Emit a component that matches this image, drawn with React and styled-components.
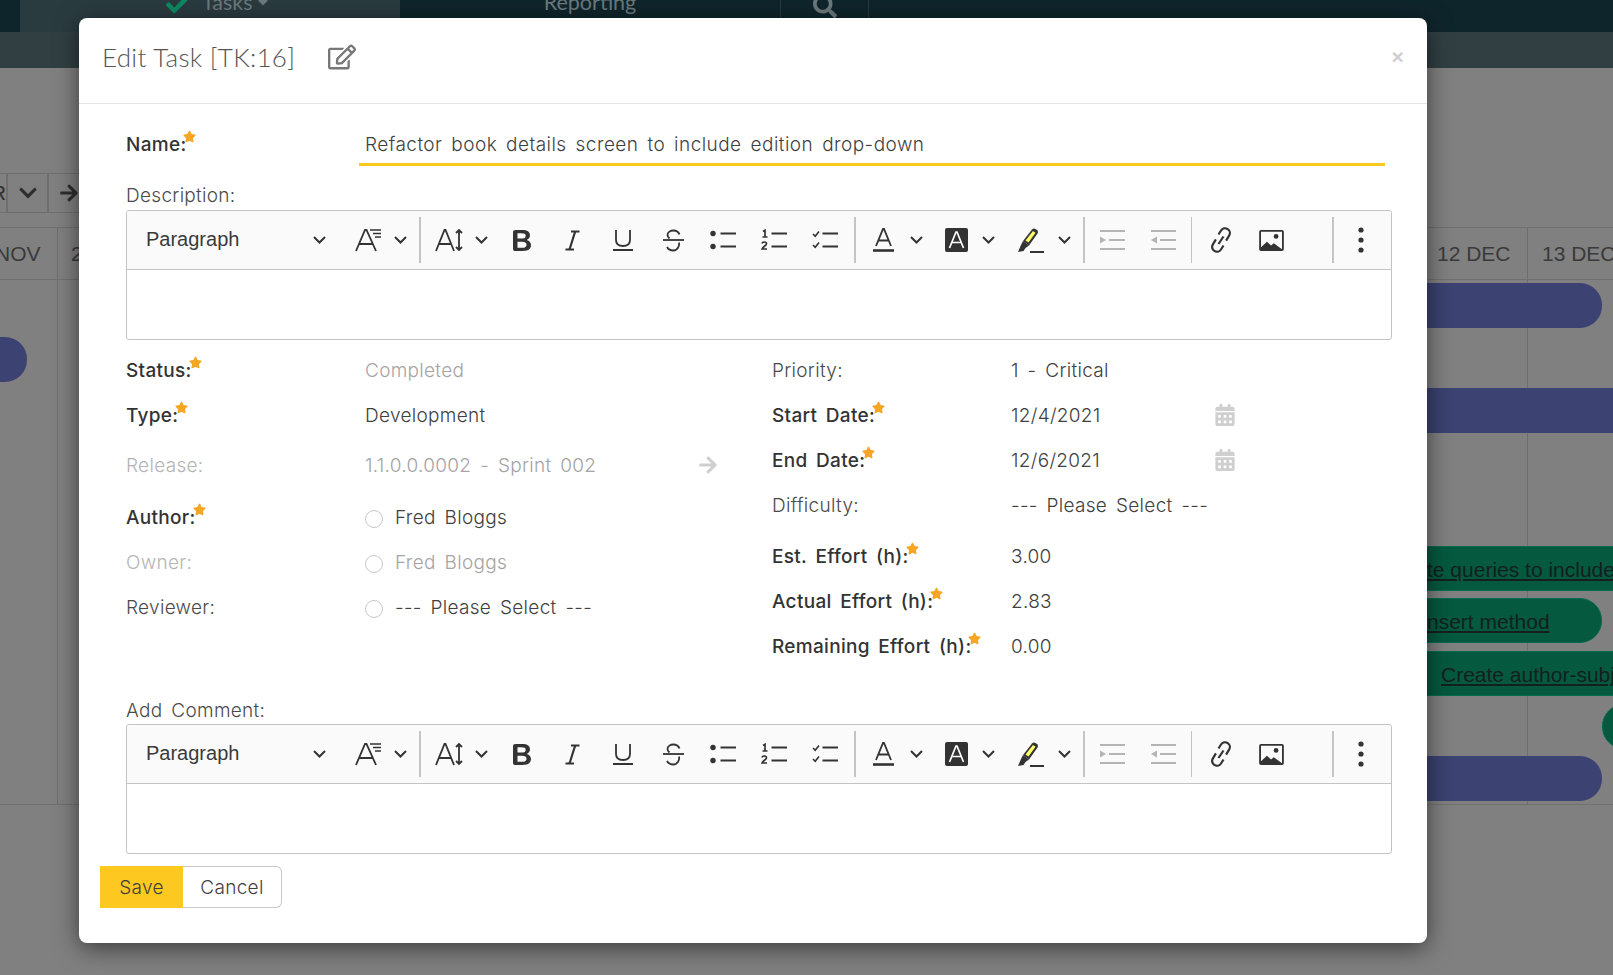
import React from 'react'
import styled, { createGlobalStyle } from 'styled-components'
import { FaRegEdit, FaStar, FaCalendarAlt, FaArrowRight, FaCheck, FaSearch, FaCaretDown, FaChevronDown } from 'react-icons/fa'

const GlobalStyle = createGlobalStyle`
  html, body {
    margin: 0;
    height: 100%;
    overflow: hidden;
    background: #808080;
  }
  * { box-sizing: border-box; }
`

const Page = styled.div`
  position: relative;
  width: 1613px;
  height: 975px;
  overflow: hidden;
  background: #808080;
  font-family: "Liberation Sans", Arial, sans-serif;
`

const TopBar = styled.div`
  display: flex;
  height: 32px;
  padding-left: 20px;
  background: #0f252c;
`

const NavTab = styled.div`
  display: flex;
  justify-content: ${p => p.$center ? 'center' : 'flex-start'};
  align-items: flex-start;
  gap: 3px;
  width: ${p => p.$w}px;
  height: 32px;
  padding-left: ${p => p.$pad || 0}px;
  overflow: hidden;
  font: 400 21.5px/20px Lato, sans-serif;
  color: #6c7a7d;
  background: ${p => p.$active ? '#2a3b40' : 'transparent'};
  border-right: 1px solid ${p => p.$active ? 'transparent' : '#2a3b40'};
  & > * { margin-top: -8px; }
  & > svg { margin-top: -6px; }
`

const TaskCheck = styled(FaCheck)`
  margin-right: 11px;
`

const SubBar = styled.div`
  height: 36px;
  background: #313f43;
`

const Gantt = styled.div`
  position: relative;
  height: 736px;
  color: #3a3a3a;
`

const GridLineV = styled.div`
  position: absolute;
  left: ${p => p.$x}px;
  top: 160px;
  width: 1px;
  height: 576px;
  background: #6e6e6e;
`

const GridLineH = styled.div`
  position: absolute;
  left: 0;
  right: 0;
  top: ${p => p.$y}px;
  height: 1px;
  background: #707070;
`

const GanttLabel = styled.div`
  position: absolute;
  left: ${p => p.$x}px;
  top: ${p => p.$y}px;
  font-size: 21px;
  line-height: 24px;
  white-space: nowrap;
`

const ToolCell = styled.div`
  position: absolute;
  display: flex;
  align-items: center;
  justify-content: ${p => p.$end ? 'flex-end' : 'center'};
  left: ${p => p.$x}px;
  top: 105px;
  width: 41px;
  height: 40px;
  overflow: hidden;
  border: 1px solid #6e6e6e;
  color: #2e2e2e;
  font-size: 20px;
`

const CutText = styled.span`
  flex: none;
  margin-right: -11px;
`

const Bar = styled.div`
  position: absolute;
  left: ${p => p.$x}px;
  top: ${p => p.$y}px;
  width: ${p => p.$w}px;
  height: 45px;
  display: flex;
  align-items: center;
  padding: 3px 0 0 ${p => p.$pad || 0}px;
  overflow: hidden;
  white-space: nowrap;
  font-size: 21px;
  color: #14201d;
  text-decoration: underline;
  background: ${p => p.$green ? '#04593f' : '#3c4272'};
  border: ${p => p.$green ? '1px solid #066c4e' : 'none'};
  border-radius: ${p => p.$radius || '0'};
`

const Modal = styled.div`
  position: absolute;
  left: 79px;
  top: 18px;
  width: 1348px;
  height: 925px;
  display: flex;
  flex-direction: column;
  background: #fff;
  border-radius: 8px;
  box-shadow: 0 5px 24px rgba(0, 0, 0, .55);
  color: #3f3f3f;
  font-family: Inter, "Noto Sans", sans-serif;
  font-size: 19px;
  font-weight: 300;
  letter-spacing: .3px;
  word-spacing: 3.2px;
`

const ModalHeader = styled.header`
  display: flex;
  align-items: center;
  justify-content: space-between;
  flex: none;
  height: 86px;
  padding: 0 23px 8px 23px;
  border-bottom: 1px solid #e5e5e5;
`

const TitleGroup = styled.div`
  display: flex;
  align-items: center;
  gap: 33px;
  color: #777;
`

const Title = styled.h4`
  margin: 0;
  font: 300 26px/30px Lato, sans-serif;
  letter-spacing: .3px;
  word-spacing: 0;
  color: #555;
`

const Close = styled.span`
  font: 700 21px/21px "Liberation Sans", sans-serif;
  color: #cfcfcf;
`

const ModalBody = styled.div`
  display: flex;
  flex-direction: column;
  padding: 18px 35px 0 47px;
`

const NameRow = styled.div`
  display: flex;
  align-items: center;
  height: 44px;
`

const NameLabel = styled.div`
  flex: none;
  margin-top: 2px;
`

const Label = styled.label`
  display: block;
  flex: none;
  width: ${p => p.$w || 239}px;
  line-height: 22px;
  font-weight: ${p => p.$required ? 500 : 300};
  color: ${p => p.$muted ? '#b4b4b4' : p.$required ? '#333' : '#4a4a4a'};
  white-space: nowrap;
  svg {
    position: relative;
    top: -8px;
    margin-left: -3px;
    color: #f5a623;
  }
`

const NameInput = styled.div`
  flex: 1;
  height: 44px;
  margin: 0 7px 0 -6px;
  padding: 0 0 0 6px;
  line-height: 46px;
  letter-spacing: .45px;
  border-bottom: 3px solid #fdc921;
  white-space: nowrap;
`

const SectionLabel = styled.div`
  margin-top: ${p => p.$mt}px;
  height: ${p => p.$h}px;
  line-height: ${p => p.$h + 2}px;
  color: #4a4a4a;
`

const Editor = styled.div`
  height: 130px;
  border: 1px solid #c4c4c4;
  border-radius: 3px;
  display: flex;
  flex-direction: column;
`

const Toolbar = styled.div`
  display: flex;
  align-items: center;
  flex: none;
  height: 59px;
  padding-left: 19px;
  background: #fafafa;
  border-bottom: 1px solid #c4c4c4;
  border-radius: 3px 3px 0 0;
  color: #333;
`

const ParagraphLabel = styled.span`
  width: 167px;
  margin-top: -2px;
  font: 400 20px/24px "Liberation Sans", sans-serif;
  letter-spacing: 0;
  word-spacing: 0;
  color: #3a3a3a;
`

const Tool = styled.span`
  display: flex;
  align-items: center;
  justify-content: center;
  flex: none;
  width: ${p => p.$w}px;
  margin-left: ${p => p.$gap || 0}px;
  color: ${p => p.$disabled ? '#b4b4b4' : '#333'};
`

const ToolSep = styled.span`
  flex: none;
  width: ${p => p.$w || 2}px;
  height: 46px;
  margin-left: ${p => p.$gap}px;
  background: #c4c4c4;
`

const FieldGrid = styled.div`
  display: flex;
  margin-top: 8px;
`

const FieldColumn = styled.div`
  display: flex;
  flex-direction: column;
  width: ${p => p.$w}px;
`

const Field = styled.div`
  display: flex;
  align-items: center;
  height: 45px;
  margin-top: ${p => p.$mt || 0}px;
`

const Value = styled.span`
  display: flex;
  align-items: center;
  flex: none;
  width: ${p => p.$w ? p.$w + 'px' : 'auto'};
  color: ${p => p.$muted ? '#a4a4a4' : '#404040'};
  white-space: nowrap;
`

const Radio = styled.span`
  flex: none;
  width: 18px;
  height: 18px;
  margin: 2px 12px 0 0;
  border: 1px solid #c8c8c8;
  border-radius: 50%;
`

const SideIcon = styled.span`
  display: flex;
  margin-top: -2px;
  color: #cfcfcf;
  font-size: ${p => p.$size}px;
`

const Actions = styled.div`
  display: flex;
  margin: 12px 0 0 -26px;
`

const SaveButton = styled.button`
  width: 83px;
  height: 42px;
  padding: 0;
  font: inherit;
  letter-spacing: inherit;
  color: #3f3f3f;
  background: #fdc921;
  border: none;
`

const CancelButton = styled.button`
  width: 99px;
  height: 42px;
  padding: 0;
  font: inherit;
  letter-spacing: inherit;
  color: #3f3f3f;
  background: #fff;
  border: 1px solid #c8c8c8;
  border-left: none;
  border-radius: 0 6px 6px 0;
`

const Chevron = () => (
  <svg width="13" height="8" viewBox="0 0 13 8" fill="none" stroke="currentColor" strokeWidth="2">
    <path d="M1 1l5.500 5.500L12 1" />
  </svg>
)

const lineIcon = { fill: 'none', stroke: 'currentColor', strokeWidth: 1.8 }

const FontSizeIcon = () => (
  <svg width="27" height="24" viewBox="0 0 27 24" {...lineIcon}>
    <path d="M1 23L10 2h1.500L21 23M4.500 16h13.500" />
    <path d="M15 2h11M18 5.500h8M20 9h6" strokeWidth="1.500" />
  </svg>
)

const LineHeightIcon = () => (
  <svg width="28" height="24" viewBox="0 0 28 24" {...lineIcon}>
    <path d="M1 23L9.500 2h1L19 23M4.500 16h11" />
    <path d="M24 2v20M21 5l3-3 3 3M21 19l3 3 3-3" />
  </svg>
)

const BoldIcon = () => (
  <svg width="18" height="21" viewBox="4 3 12 14" fill="currentColor">
    <path d="M10.187 17H5.773c-.637 0-1.092-.138-1.364-.415-.273-.277-.409-.718-.409-1.323V4.738c0-.617.14-1.062.419-1.332.279-.27.73-.406 1.354-.406h4.68c.69 0 1.288.041 1.793.124.506.083.96.242 1.36.478.341.197.644.447.906.75a3.262 3.262 0 0 1 .808 2.162c0 1.401-.722 2.426-2.167 3.075C15.05 10.175 16 11.315 16 13.01a3.756 3.756 0 0 1-2.296 3.504 6.1 6.1 0 0 1-1.517.377c-.571.073-1.238.11-2 .11zm-.217-6.217H7v4.087h3.069c1.977 0 2.965-.69 2.965-2.072 0-.707-.256-1.22-.768-1.537-.512-.319-1.277-.478-2.296-.478zM7 5.13v3.619h2.606c.729 0 1.292-.067 1.69-.2a1.6 1.6 0 0 0 .91-.765c.165-.267.247-.566.247-.897 0-.707-.26-1.176-.778-1.409-.519-.232-1.31-.348-2.375-.348H7z" />
  </svg>
)

const ItalicIcon = () => (
  <svg width="15" height="21" viewBox="0 0 15 21" {...lineIcon}>
    <path d="M6 1.500h8.500M.5 19.500H9" />
    <path d="M10.200 1.500L4.500 19.500" strokeWidth="2.200" />
  </svg>
)

const UnderlineIcon = () => (
  <svg width="20" height="22" viewBox="0 0 20 22" {...lineIcon}>
    <path d="M3 1v10c0 4 3 6 7 6s7-2 7-6V1" />
    <path d="M0 21h20" strokeWidth="2" />
  </svg>
)

const StrikeIcon = () => (
  <svg width="21" height="23" viewBox="0 0 21 23" {...lineIcon}>
    <path d="M16.500 5.500C15.500 3 13 1.500 10.500 1.500 7.500 1.500 4.500 3 4.500 6c0 1.500.8 2.500 2 3.500" />
    <path d="M0 11h21" />
    <path d="M16 13.500c.8 3.500-1.500 8-5.500 8-3.500 0-5.500-1.500-6.500-3.500" />
  </svg>
)

const BulletIcon = () => (
  <svg width="26" height="20" viewBox="0 0 26 20" fill="currentColor">
    <circle cx="3" cy="3.500" r="2.700" />
    <circle cx="3" cy="16.500" r="2.700" />
    <path d="M10.500 2.500H26v2H10.500zM10.500 15.500H26v2H10.500z" />
  </svg>
)

const NumberedIcon = () => (
  <svg width="26" height="22" viewBox="0 0 26 22" fill="none" stroke="currentColor" strokeWidth="1.700">
    <path d="M2 2.500l2-1.200V8M1.500 8h5" />
    <path d="M1 14.500c.5-2 4.500-2 4.500.2 0 1.800-3.500 3-4.500 5.300h5" />
    <path d="M10.500 4.500H26M10.500 17.500H26" strokeWidth="2" />
  </svg>
)

const TodoIcon = () => (
  <svg width="26" height="20" viewBox="0 0 26 20" fill="none" stroke="currentColor" strokeWidth="1.600">
    <path d="M1 4l2.200 2.200L7 1.500M1 15l2.200 2.200L7 12.500" />
    <path d="M10.500 3.500H26M10.500 16.500H26" strokeWidth="2" />
  </svg>
)

const FontColorIcon = () => (
  <svg width="21" height="24" viewBox="0 0 21 24" {...lineIcon}>
    <path d="M3 18L10 1h1l7 17M5.500 12.500h10" />
    <path d="M0 22.500h21" strokeWidth="2.600" />
  </svg>
)

const BackgroundIcon = () => (
  <svg width="23" height="24" viewBox="0 0 23 24">
    <rect width="23" height="24" rx="2" fill="#333" />
    <path d="M4.500 20L11 4h1l6.500 16M7 14.500h9" fill="none" stroke="#fff" strokeWidth="1.700" />
  </svg>
)

const HighlightIcon = () => (
  <svg width="27" height="26" viewBox="0 0 27 26">
    <path d="M6 14L15 2.500Q16.500 1 18.500 2L20.500 3.500Q21.500 5 20.500 6.500L12 18.500z" fill="#333" />
    <path d="M8.500 13.500L16 4l2.500 1.800L11.500 15.500z" fill="#ffff66" />
    <path d="M6 14l6 4.500-3.500 2.500-4.500-3zM4 18l-3 7 5.500-1 2-3z" fill="#333" />
    <path d="M13 25h14" stroke="#333" strokeWidth="2" />
  </svg>
)

const IndentIcon = ({ flip }) => (
  <svg width="26" height="22" viewBox="0 0 26 22" fill="currentColor">
    <path d="M1 1h25v2H1zM10 10h16v2H10zM1 19h25v2H1z" />
    <path d={flip ? 'M7 7.500v7L1 11z' : 'M1 7.500v7L7 11z'} />
  </svg>
)

const LinkIcon = () => (
  <svg width="22" height="26" viewBox="0 0 22 26" fill="none" stroke="currentColor" strokeWidth="2.200">
    <path d="M8.500 7.500l2.500-4c1.500-2.200 4.500-2.800 6.700-1.400 2.200 1.400 2.800 4.300 1.400 6.500l-3 5" />
    <path d="M13.500 18.500l-2.500 4c-1.500 2.200-4.500 2.800-6.700 1.400-2.200-1.400-2.800-4.300-1.400-6.500l3-5" />
    <path d="M13.500 9.500l-5 7.500" />
  </svg>
)

const ImageIcon = () => (
  <svg width="25" height="21" viewBox="0 0 27 23" fill="#333">
    <path fillRule="evenodd" d="M2 0h23a2 2 0 0 1 2 2v19a2 2 0 0 1-2 2H2a2 2 0 0 1-2-2V2a2 2 0 0 1 2-2zm0 2v17l6.500-6 4.500 4 3-2.500 9 6.500V2z" />
    <circle cx="18.500" cy="7" r="2.600" />
  </svg>
)

const DotsIcon = () => (
  <svg width="6" height="26" viewBox="0 0 6 26" fill="currentColor">
    <circle cx="3" cy="3" r="2.600" />
    <circle cx="3" cy="13" r="2.600" />
    <circle cx="3" cy="23" r="2.600" />
  </svg>
)

const RichEditor = () => (
  <Editor>
    <Toolbar>
      <ParagraphLabel>Paragraph</ParagraphLabel>
      <Tool $w={13}><Chevron /></Tool>
      <Tool $w={27} $gap={29}><FontSizeIcon /></Tool>
      <Tool $w={13} $gap={12}><Chevron /></Tool>
      <ToolSep $gap={12} />
      <Tool $w={28} $gap={14}><LineHeightIcon /></Tool>
      <Tool $w={13} $gap={12}><Chevron /></Tool>
      <Tool $w={18} $gap={25}><BoldIcon /></Tool>
      <Tool $w={15} $gap={34}><ItalicIcon /></Tool>
      <Tool $w={20} $gap={33}><UnderlineIcon /></Tool>
      <Tool $w={21} $gap={30}><StrikeIcon /></Tool>
      <Tool $w={26} $gap={26}><BulletIcon /></Tool>
      <Tool $w={26} $gap={25}><NumberedIcon /></Tool>
      <Tool $w={26} $gap={25}><TodoIcon /></Tool>
      <ToolSep $gap={16} />
      <Tool $w={21} $gap={17}><FontColorIcon /></Tool>
      <Tool $w={13} $gap={16}><Chevron /></Tool>
      <Tool $w={23} $gap={22}><BackgroundIcon /></Tool>
      <Tool $w={13} $gap={14}><Chevron /></Tool>
      <Tool $w={27} $gap={22}><HighlightIcon /></Tool>
      <Tool $w={13} $gap={14}><Chevron /></Tool>
      <ToolSep $gap={12} />
      <Tool $w={26} $gap={14} $disabled><IndentIcon /></Tool>
      <Tool $w={26} $gap={25} $disabled><IndentIcon flip /></Tool>
      <ToolSep $gap={15} $w={1} />
      <Tool $w={22} $gap={18}><LinkIcon /></Tool>
      <Tool $w={27} $gap={26}><ImageIcon /></Tool>
      <ToolSep $gap={47} />
      <Tool $w={6} $gap={24}><DotsIcon /></Tool>
    </Toolbar>
  </Editor>
)

const Required = ({ children, ...rest }) => (
  <Label $required {...rest}>{children}<FaStar size={13} /></Label>
)

export default function App() {
  return (
    <Page>
      <GlobalStyle />
      <TopBar>
        <NavTab $active $w={380} $pad={146}>
          <TaskCheck size={22} color="#0d8a63" />
          <span>Tasks</span>
          <FaCaretDown size={16} />
        </NavTab>
        <NavTab $center $w={381}><span>Reporting</span></NavTab>
        <NavTab $center $w={88}><FaSearch size={24} /></NavTab>
      </TopBar>
      <SubBar />
      <Gantt>
        <GridLineH $y={159} />
        <GridLineH $y={211} />
        <GridLineH $y={736} />
        <GridLineV $x={57} />
        <GridLineV $x={1527} />
        <ToolCell $x={-34} $end><CutText>Re</CutText></ToolCell>
        <ToolCell $x={7}><FaChevronDown /></ToolCell>
        <ToolCell $x={48}><FaArrowRight /></ToolCell>
        <GanttLabel $x={-5} $y={174}>NOV</GanttLabel>
        <GanttLabel $x={71} $y={174}>2</GanttLabel>
        <GanttLabel $x={1437} $y={174}>12 DEC</GanttLabel>
        <GanttLabel $x={1542} $y={174}>13 DEC</GanttLabel>
        <Bar $x={-20} $y={269} $w={47} $radius="0 22px 22px 0" />
        <Bar $x={1420} $y={215} $w={182} $radius="0 22px 22px 0" />
        <Bar $x={1420} $y={320} $w={200} />
        <Bar $x={1420} $y={478} $w={200} $green $pad={6}>te queries to include</Bar>
        <Bar $x={1420} $y={530} $w={182} $green $radius="0 22px 22px 0" $pad={6}>nsert method</Bar>
        <Bar $x={1420} $y={583} $w={200} $green $pad={20}>Create author-subj</Bar>
        <Bar $x={1602} $y={636} $w={30} $green $radius="22px 0 0 22px" />
        <Bar $x={1420} $y={688} $w={182} $radius="0 22px 22px 0" />
      </Gantt>
      <Modal>
        <ModalHeader>
          <TitleGroup>
            <Title>Edit Task [TK:16]</Title>
            <FaRegEdit size={28} />
          </TitleGroup>
          <Close>×</Close>
        </ModalHeader>
        <ModalBody>
          <NameRow>
            <NameLabel><Required>Name:</Required></NameLabel>
            <NameInput>Refactor book details screen to include edition drop-down</NameInput>
          </NameRow>
          <SectionLabel $mt={14} $h={30}>Description:</SectionLabel>
          <RichEditor />
          <FieldGrid>
            <FieldColumn $w={646}>
              <Field><Required>Status:</Required><Value $muted>Completed</Value></Field>
              <Field><Required>Type:</Required><Value>Development</Value></Field>
              <Field $mt={5}>
                <Label $muted>Release:</Label>
                <Value $muted $w={333}>1.1.0.0.0002 - Sprint 002</Value>
                <SideIcon $size={20}><FaArrowRight /></SideIcon>
              </Field>
              <Field $mt={7}><Required>Author:</Required><Radio /><Value>Fred Bloggs</Value></Field>
              <Field><Label $muted>Owner:</Label><Radio /><Value $muted>Fred Bloggs</Value></Field>
              <Field><Label>Reviewer:</Label><Radio /><Value>--- Please Select ---</Value></Field>
            </FieldColumn>
            <FieldColumn $w={600}>
              <Field><Label $w={239}>Priority:</Label><Value>1 - Critical</Value></Field>
              <Field>
                <Required $w={239}>Start Date:</Required>
                <Value $w={203}>12/4/2021</Value>
                <SideIcon $size={22}><FaCalendarAlt /></SideIcon>
              </Field>
              <Field>
                <Required $w={239}>End Date:</Required>
                <Value $w={203}>12/6/2021</Value>
                <SideIcon $size={22}><FaCalendarAlt /></SideIcon>
              </Field>
              <Field><Label $w={239}>Difficulty:</Label><Value>--- Please Select ---</Value></Field>
              <Field $mt={6}><Required $w={239}>Est. Effort (h):</Required><Value>3.00</Value></Field>
              <Field><Required $w={239}>Actual Effort (h):</Required><Value>2.83</Value></Field>
              <Field><Required $w={239}>Remaining Effort (h):</Required><Value>0.00</Value></Field>
            </FieldColumn>
          </FieldGrid>
          <SectionLabel $mt={27} $h={28}>Add Comment:</SectionLabel>
          <RichEditor />
          <Actions>
            <SaveButton>Save</SaveButton>
            <CancelButton>Cancel</CancelButton>
          </Actions>
        </ModalBody>
      </Modal>
    </Page>
  )
}
